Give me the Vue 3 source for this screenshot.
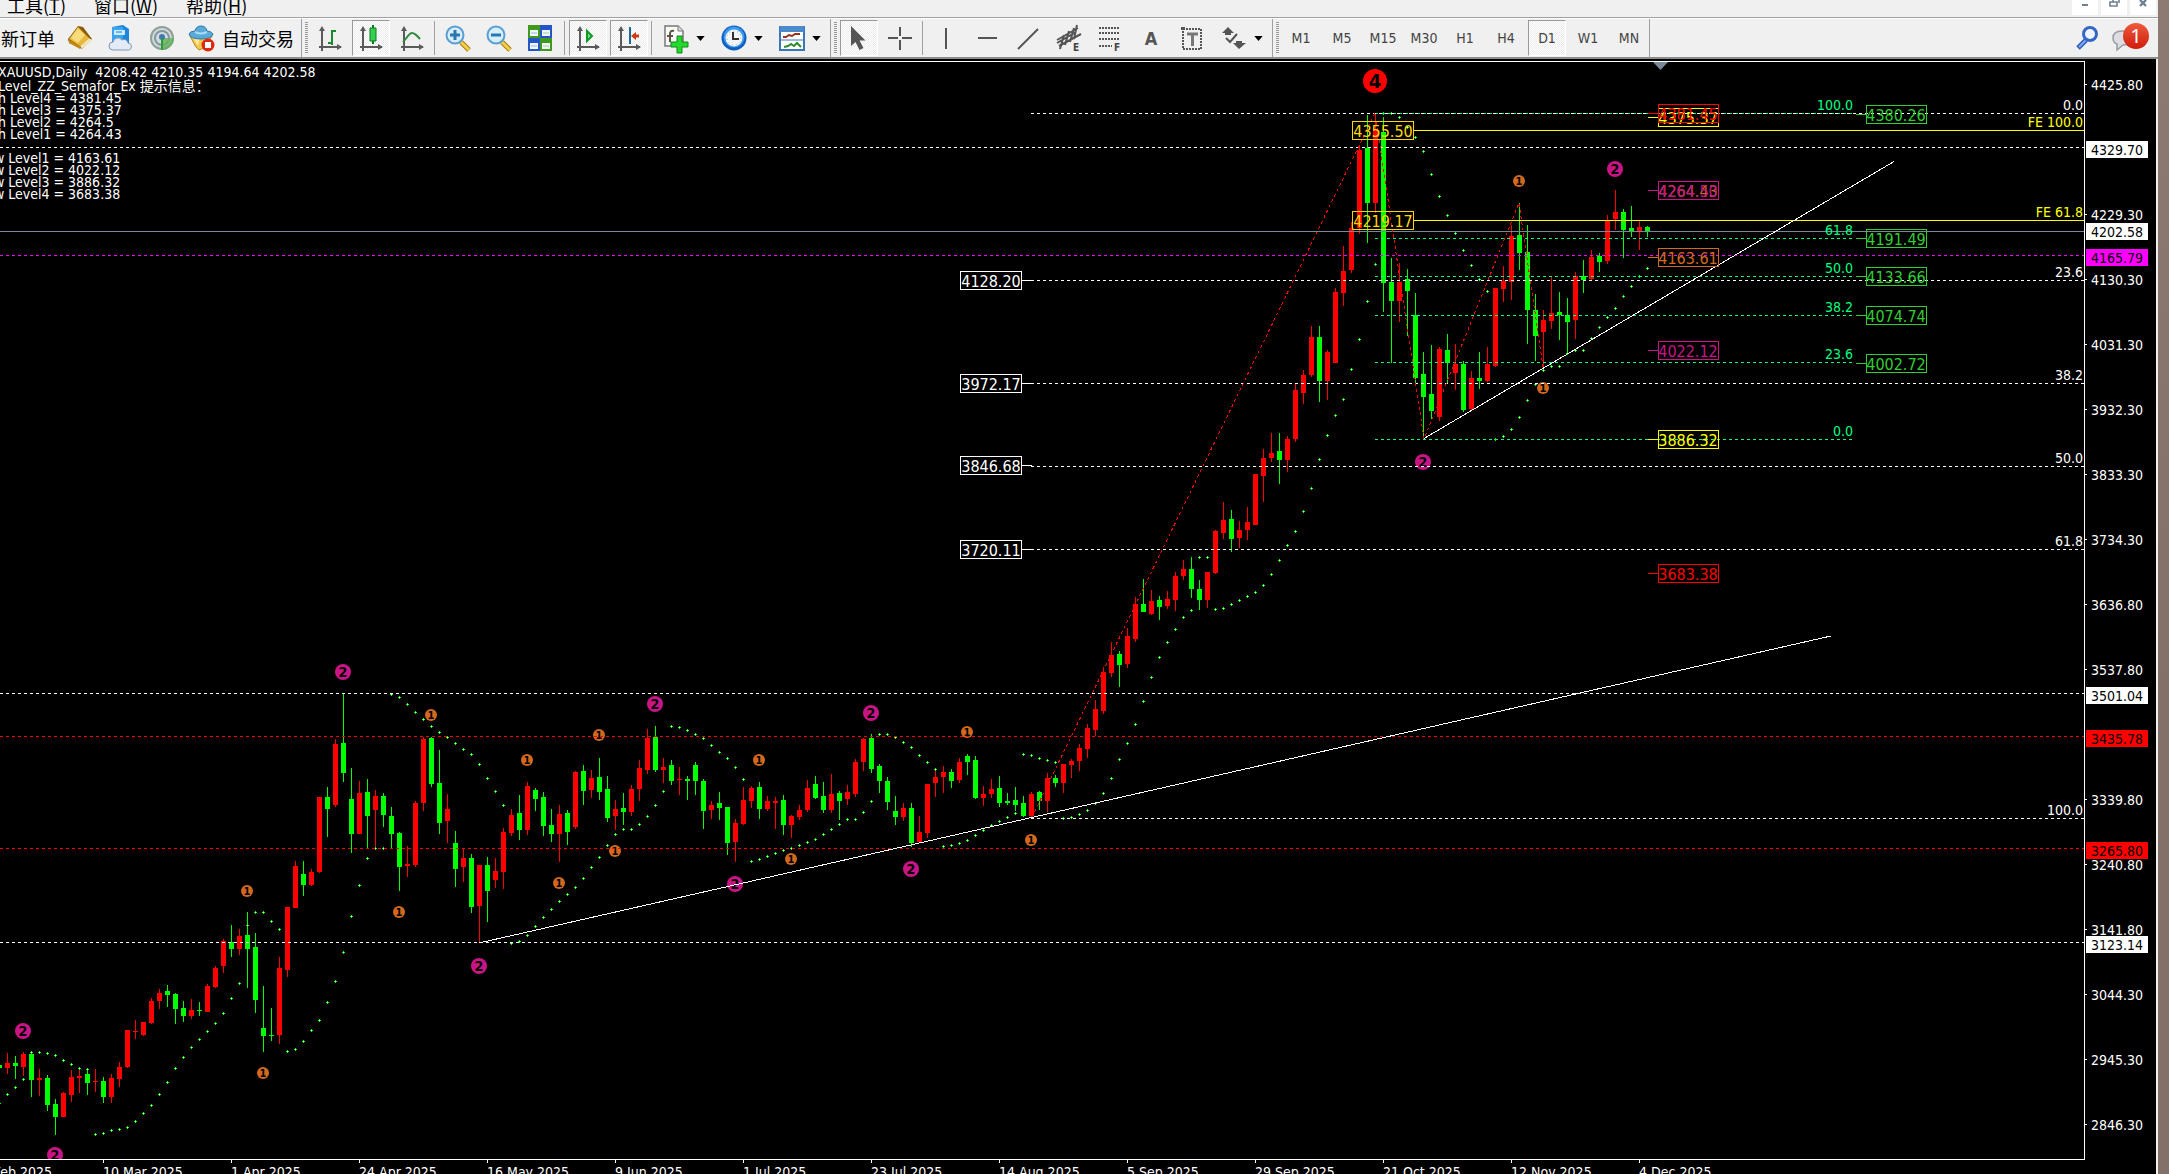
<script setup>
const menus = [
  { name: '工具', key: 'T' },
  { name: '窗口', key: 'W' },
  { name: '帮助', key: 'H' },
]
const frames = ['M1', 'M5', 'M15', 'M30', 'H1', 'H4', 'D1', 'W1', 'MN']

const FOLD = 640
const SPREAD = 1.0218
const row = (y) => (y > FOLD ? Math.round(FOLD + (y - FOLD) * SPREAD) : y)
const col = (i) => 7 + 8 * i

// Each bar: direction, high, body top, body bottom, low.
const raw = `g 1055 1056 1059 1059|r 1044 1054 1059 1065|g 1047 1054 1057 1070|r 1043 1045 1058 1067|g 1043 1045 1071 1087|r 1060 1069 1071 1086|g 1066 1069 1095 1101|g 1089 1094 1107 1124|r 1082 1083 1107 1107|r 1061 1068 1085 1092|r 1059 1067 1069 1083|g 1059 1065 1074 1085|r 1060 1072 1073 1082|g 1068 1072 1087 1093|r 1065 1069 1087 1093|r 1053 1058 1070 1077|r 1022 1022 1058 1059|r 1012 1023 1024 1030|r 1014 1014 1027 1028|r 990 993 1015 1016|r 982 985 993 1001|g 978 984 987 999|g 985 986 1001 1016|g 993 1000 1008 1014|r 991 1002 1008 1011|g 994 1002 1003 1008|r 977 979 1004 1004|r 959 961 980 981|r 933 935 959 966|g 919 936 942 950|r 923 930 942 948|g 906 929 942 981|g 927 940 992 1005|g 979 1020 1028 1043|g 1000 1027 1028 1032|r 950 961 1027 1035|r 901 901 963 970|r 856 861 902 902|g 856 869 880 891|r 864 867 880 881|r 794 794 867 868|g 784 794 805 833|r 737 742 801 803|g 693 741 770 779|g 765 796 830 848|r 778 790 830 830|g 776 789 812 844|r 787 793 806 843|g 790 793 811 823|g 803 812 830 844|g 828 829 862 886|r 842 859 861 872|r 798 800 860 862|r 735 737 800 807|g 735 736 781 784|g 748 780 819 830|r 791 805 817 839|g 827 839 864 882|r 844 853 862 877|g 849 853 901 907|r 860 860 900 937|g 852 860 886 916|r 853 866 875 883|r 824 828 867 884|r 805 811 829 832|g 792 809 826 836|r 779 783 826 831|g 785 787 796 807|g 789 794 822 832|g 805 821 830 838|r 801 810 830 857|g 806 809 828 841|r 768 769 823 825|g 762 768 788 801|r 767 775 787 795|g 755 774 789 797|g 773 786 814 818|r 797 805 812 826|g 790 804 808 821|r 782 786 808 812|r 757 765 786 798|r 727 736 767 771|g 724 735 767 769|r 755 764 767 780|g 757 762 778 782|r 764 776 777 792|g 773 776 778 797|g 759 762 778 792|g 776 778 807 825|r 798 801 806 815|g 789 800 804 816|g 803 803 839 850|r 815 819 838 857|r 784 797 820 821|r 783 785 798 804|g 779 784 805 815|r 793 798 805 807|r 794 798 800 825|g 792 797 821 831|r 811 812 821 834|r 801 806 813 816|r 777 785 806 808|g 773 781 795 796|g 779 793 806 809|r 771 791 806 809|g 788 790 798 816|r 782 789 796 801|r 756 759 791 794|r 736 737 759 768|g 732 736 766 770|g 761 763 778 790|g 774 778 799 806|g 793 807 813 821|r 800 804 813 817|g 800 804 839 843|r 812 828 838 838|r 781 781 829 834|r 766 774 780 794|r 763 769 774 790|g 766 769 778 785|r 755 759 777 780|g 752 754 759 772|g 754 757 795 796|r 783 791 795 802|r 776 786 791 795|g 773 785 800 803|g 790 798 800 801|g 784 797 801 807|g 793 800 812 813|r 789 791 812 814|g 788 789 798 806|r 770 775 798 808|g 772 775 780 784|r 761 761 780 790|r 756 758 762 775|r 742 746 758 768|r 722 726 747 755|r 699 708 728 734|r 666 671 709 712|r 642 655 672 676|g 651 654 664 686|r 628 636 663 667|r 597 604 639 642|g 579 604 612 612|r 590 601 614 615|g 596 600 607 620|r 591 599 606 609|r 572 576 600 611|r 560 569 576 580|g 557 569 589 598|g 580 589 600 610|r 572 572 600 608|r 530 531 573 574|r 502 520 533 539|g 510 519 539 552|r 521 530 538 548|r 507 522 530 540|r 474 474 525 525|r 449 458 476 502|r 433 453 458 462|g 433 451 460 484|r 436 439 460 472|r 383 390 439 442|r 370 375 393 404|r 326 337 375 377|g 326 337 381 402|r 350 352 381 400|r 288 292 363 363|r 246 271 293 306|r 222 228 270 273|r 145 150 228 234|g 115 148 203 243|r 113 129 203 213|g 117 132 283 312|g 258 282 301 363|r 263 282 301 322|g 269 279 291 336|g 293 315 378 383|g 352 374 397 439|g 345 394 411 419|r 347 349 417 421|g 334 350 363 383|r 344 364 373 390|g 361 364 410 412|r 371 378 409 411|g 352 378 381 389|r 347 364 381 382|r 288 288 366 367|r 266 281 289 302|r 225 236 282 300|g 203 235 253 270|g 225 252 310 344|g 294 310 336 361|r 310 320 332 367|r 277 313 321 329|g 292 312 315 340|g 298 315 322 352|r 272 276 320 339|g 260 276 280 293|r 250 257 279 280|g 253 256 262 272|r 215 221 261 264|r 190 212 219 230|g 209 212 230 258|g 206 228 232 237|r 221 227 232 250|g 226 227 232 237`
const candles = raw.split('|').map((s, n) => {
  const [c, h, t, b, l] = s.split(' ')
  const top = row(+t)
  const bottom = row(+b)
  return {
    x: col(n - 1),
    fill: c === 'g' ? '#00ff00' : '#ff0000',
    high: row(+h),
    low: row(+l),
    top,
    bottom: Math.max(bottom, top + 1),
  }
})

// Parabolic runs: index of the first bar, then one row per bar.
const runs = [
  [-1, 1093, 1084, 1077, 1070],
  [3, 1043, 1043, 1044, 1046, 1051, 1055, 1059, 1060],
  [11, 1123, 1122, 1120, 1119, 1117, 1111, 1103, 1095, 1084, 1073, 1059, 1048, 1038, 1030, 1023, 1015, 1005, 990, 976, 919],
  [31, 906, 906, 915, 923],
  [35, 1042, 1040, 1032, 1022, 1012, 994, 974, 945, 910, 880, 853, 844, 844],
  [48, 693, 696, 703, 710, 717, 724, 730, 735, 741, 747, 752, 761, 775, 788, 801],
  [63, 937, 935, 929, 920, 911, 903, 895, 889, 882, 873, 862, 852, 841, 830, 825, 825, 820, 812, 801, 788],
  [83, 724, 725, 728, 732, 736, 743, 750, 755, 764, 776],
  [93, 856, 854, 851, 848, 846, 844, 841, 838, 835, 830, 825, 820, 815, 815, 808, 798],
  [109, 732, 732, 735, 740, 745, 753, 759, 766],
  [117, 842, 841, 839, 836, 831, 826, 821, 817, 813, 809],
  [127, 752, 753, 755, 757, 759],
  [132, 814, 813, 810, 806, 800, 790, 775, 756, 741, 722, 700, 676, 657, 642, 629, 617, 610],
  [149, 557, 557],
  [151, 609, 608, 604, 600, 596, 592, 585, 574, 560, 545, 531, 511, 488, 459, 435, 415, 399, 369, 339, 301, 264],
  [172, 113, 113, 117, 127, 137, 151, 174, 196, 215, 233, 250, 265, 279, 291],
  [186, 439, 436, 429, 417, 400, 384, 370, 366, 366, 353, 350, 350, 338, 327, 317, 308, 296, 286, 276, 268],
]
const dots = runs.flatMap(([start, ...ys]) => ys.map((y, k) => ({ x: col(start + k), y: row(y) })))

const marks = [
  { k: 2, at: [[23, 1031], [55, 1155], [343, 672], [655, 704], [735, 884], [479, 966], [871, 713], [911, 869], [1615, 169], [1423, 462]] },
  { k: 1, at: [[247, 891], [399, 912], [263, 1073], [431, 715], [527, 760], [599, 735], [559, 883], [615, 851], [759, 760], [791, 859], [967, 732], [1031, 840], [1519, 181], [1543, 388]] },
  { k: 4, at: [[1375, 81]] },
]
const markStyle = {
  1: { r: 6, fill: '#d2691e', size: 11, drop: 4 },
  2: { r: 8, fill: '#c71585', size: 14, drop: 5 },
  4: { r: 12, fill: '#ff0000', size: 20, drop: 7 },
}
const semafors = marks.flatMap((m) => m.at.map(([x, y]) => ({ x, y, k: m.k, ...markStyle[m.k] })))

const dashed = [
  [0, 2084, 147, '#fff'], [0, 2084, 693, '#fff'], [0, 2084, 942, '#fff'],
  [0, 2084, 736, '#f00'], [0, 2084, 848, '#f00'], [0, 2084, 255, '#f0f'],
  [1375, 1852, 113, '#00ff7f'], [1375, 1852, 238, '#00ff7f'], [1375, 1852, 276, '#00ff7f'],
  [1375, 1852, 315, '#00ff7f'], [1375, 1852, 362, '#00ff7f'], [1375, 1852, 439, '#00ff7f'],
  [1031, 2084, 113, '#fff'], [1031, 2084, 280, '#fff'], [1031, 2084, 383, '#fff'],
  [1031, 2084, 466, '#fff'], [1031, 2084, 549, '#fff'], [1031, 2084, 818, '#fff'],
]
const fibs = [
  ['0.0', 2083, 113, '#fff'], ['23.6', 2083, 280, '#fff'], ['38.2', 2083, 383, '#fff'],
  ['50.0', 2083, 466, '#fff'], ['61.8', 2083, 549, '#fff'], ['100.0', 2083, 818, '#fff'],
  ['FE 100.0', 2083, 130, '#ff0'], ['FE 61.8', 2083, 220, '#ff0'],
  ['100.0', 1853, 113, '#00ff7f'], ['61.8', 1853, 238, '#00ff7f'], ['50.0', 1853, 276, '#00ff7f'],
  ['38.2', 1853, 315, '#00ff7f'], ['23.6', 1853, 362, '#00ff7f'], ['0.0', 1853, 439, '#00ff7f'],
]
// Price tags: text, box left, line row, colour, side of the connector.
const tags = [
  ['4128.20', 960, 280, '#fff', 'r'], ['3972.17', 960, 383, '#fff', 'r'],
  ['3846.68', 960, 465, '#fff', 'r'], ['3720.11', 960, 549, '#fff', 'r'],
  ['4355.50', 1352, 130, '#ffd700', ''], ['4219.17', 1352, 220, '#ffd700', ''],
  ['4375.37', 1658, 117, '#ff0', 'l'], ['4381.45', 1658, 113, '#f00', 'l'],
  ['4264.43', 1658, 190, '#d2691e', 'l'], ['4264.50', 1658, 190, '#c71585', 'l'],
  ['4163.61', 1658, 257, '#d2691e', 'l'], ['4022.12', 1658, 350, '#c71585', 'l'],
  ['3886.32', 1658, 439, '#ff0', 'l'], ['3683.38', 1658, 573, '#f00', 'l'],
  ['4380.26', 1866, 114, '#32cd32', 'l'], ['4191.49', 1866, 238, '#32cd32', 'l'],
  ['4133.66', 1866, 276, '#32cd32', 'l'], ['4074.74', 1866, 315, '#32cd32', 'l'],
  ['4002.72', 1866, 363, '#32cd32', 'l'],
]
const scale = [
  ['4425.80', 84], ['4229.30', 214], ['4130.30', 279], ['4031.30', 344], ['3932.30', 409],
  ['3833.30', 474], ['3734.30', 539], ['3636.80', 604], ['3537.80', 669], ['3339.80', 799],
  ['3240.80', 864], ['3141.80', 929], ['3044.30', 994], ['2945.30', 1059], ['2846.30', 1124],
]
const flags = [
  ['4329.70', 141, '#fff', '#000'], ['4202.58', 223, '#fff', '#000'], ['4165.79', 249, '#f0f', '#000'],
  ['3501.04', 687, '#fff', '#000'], ['3435.78', 730, '#f00', '#000'], ['3265.80', 842, '#f00', '#000'],
  ['3123.14', 936, '#fff', '#000'],
]
const dates = ['10 Mar 2025', '1 Apr 2025', '24 Apr 2025', '16 May 2025', '9 Jun 2025', '1 Jul 2025', '23 Jul 2025',
  '14 Aug 2025', '5 Sep 2025', '29 Sep 2025', '21 Oct 2025', '12 Nov 2025', '4 Dec 2025']
const info = [
  ['XAUUSD,Daily\u00a0 4208.42 4210.35 4194.64 4202.58', -2, 77],
  ['Level_ZZ_Semafor_Ex 提示信息：', -2, 91],
  ['h Level4 = 4381.45', -2, 103], ['h Level3 = 4375.37', -2, 115],
  ['h Level2 = 4264.5', -2, 127], ['h Level1 = 4264.43', -2, 139],
  ['w Level1 = 4163.61', -6, 163], ['w Level2 = 4022.12', -6, 175],
  ['w Level3 = 3886.32', -6, 187], ['w Level4 = 3683.38', -6, 199],
]
</script>

<template>
  <div class="desktop">
    <main class="window">
      <header class="menubar">
        <nav class="menus">
          <button v-for="m in menus" :key="m.key" class="menu">{{ m.name }}(<u>{{ m.key }}</u>)</button>
        </nav>
        <div class="winbtns">
          <button aria-label="最小化"><svg viewBox="0 0 26 15"><path d="M10 5h6" stroke="#6f8093" stroke-width="2" /></svg></button>
          <button aria-label="还原"><svg viewBox="0 0 26 15"><path d="M9 2h7v4H9zM12 2V0M12 -1h6v4" fill="none" stroke="#6f8093" stroke-width="1.6" /></svg></button>
          <button aria-label="关闭"><svg viewBox="0 0 26 15"><path d="M10 0l6 6M16 0l-6 6" stroke="#6f8093" stroke-width="2.4" /></svg></button>
        </div>
      </header>

      <div class="toolbar">
        <button class="tool order">新订单</button>
        <button class="tool" aria-label="历史数据">
          <svg class="ic" viewBox="0 0 26 26"><path d="M1 14 11 1l5 1 9 12-10 10L2 18z" fill="#8a5a08" /><path d="M2 14 11 2l11 11-9 8z" fill="#e9b83a" /><path d="M4 13 11 3l7 7-7 8z" fill="#f8db7d" /><path d="M2 15l11 6v3L2 18z" fill="#c48a16" /><path d="M13 21l9-8 3 2-10 9z" fill="#f3e3b0" /></svg>
        </button>
        <button class="tool" aria-label="虚拟主机">
          <svg class="ic" viewBox="0 0 26 26"><path d="M4 2 15 0l6 4v14H4z" fill="#1c86d8" /><path d="M4 2h11v14H4z" fill="#39a5f0" /><path d="M6 5h11v5H6z" fill="#c9ecff" /><path d="M8 7h6" stroke="#1c86d8" /><path d="M5 25a4 4 0 0 1 0-8 5 5 0 0 1 9-2 4 4 0 0 1 6 3 3.600 3.600 0 0 1 1 7z" fill="#e3ebf6" stroke="#7e95b5" /></svg>
        </button>
        <button class="tool" aria-label="信号">
          <svg class="ic" viewBox="0 0 26 26"><circle cx="13" cy="13" r="12" fill="#d3dbd6" /><circle cx="13" cy="13" r="11" fill="none" stroke="#8fa09a" stroke-width="2" /><circle cx="13" cy="13" r="7" fill="none" stroke="#8296a8" stroke-width="2" /><path d="M13 13h12a12 12 0 0 1-12 12z" fill="#63b25c" opacity=".8" /><circle cx="13" cy="12" r="3" fill="#3f78b8" /><path d="M13 13v12" stroke="#2d9a34" stroke-width="2" /></svg>
        </button>
        <button class="tool auto">
          <svg class="ic" viewBox="0 0 26 26"><path d="M2 11h22l-8 12-5 2-3-3z" fill="#f0c94c" stroke="#b9861a" /><path d="M5 13l5 8 2-8z" fill="#fbe9a0" /><path d="M1 9q1 5 12 5t12-5q-2-3-6-3-1-5-6-5T7 6Q2 6 1 9z" fill="#5aa9d8" stroke="#2f7ba8" /><path d="M7 7q6 3 12 0" stroke="#a8dcf5" stroke-width="2" fill="none" /><circle cx="20" cy="20" r="6.500" fill="#dc2a12" /><path d="M17 17h6v6h-6z" fill="#fff" /></svg>
          自动交易
        </button>
        <i class="sep tall"></i><i class="grip"></i>
        <button class="tool" aria-label="柱状图">
          <svg class="ic" viewBox="0 0 26 26"><path d="M5 3v23M2 22h22" class="ax" /><path d="M5 1l3 5H2zM25 22l-5-3v6z" fill="#5a5a5a" /><path d="M15 5v15M15 6h4M11 18h4" stroke="#168a2c" stroke-width="2" fill="none" /></svg>
        </button>
        <button class="tool on" aria-label="阴阳烛">
          <svg class="ic" viewBox="0 0 26 26"><path d="M5 3v23M2 22h22" class="ax" /><path d="M5 1l3 5H2zM25 22l-5-3v6z" fill="#5a5a5a" /><path d="M15 0v19" stroke="#087a1e" stroke-width="2" /><path d="M12 3h6v13h-6z" fill="#35d04e" stroke="#087a1e" stroke-width="1" /></svg>
        </button>
        <button class="tool" aria-label="折线图">
          <svg class="ic" viewBox="0 0 26 26"><path d="M5 3v23M2 22h22" class="ax" /><path d="M5 1l3 5H2zM25 22l-5-3v6z" fill="#5a5a5a" /><path d="M4 17C8 13 10 8 13 8q3 0 8 6" stroke="#2f8a41" stroke-width="2" fill="none" /></svg>
        </button>
        <i class="sep"></i>
        <button class="tool" aria-label="放大">
          <svg class="ic" viewBox="0 0 26 26"><path d="M16 17l8 8" stroke="#a8780e" stroke-width="5" /><path d="M16 17l8 8" stroke="#f3cf4a" stroke-width="3" /><circle cx="10" cy="10" r="8.500" fill="#d6edfb" stroke="#5a9fd0" stroke-width="2" /><path d="M10 5v10M5 10h10" stroke="#2a76ad" stroke-width="3" /></svg>
        </button>
        <button class="tool" aria-label="缩小">
          <svg class="ic" viewBox="0 0 26 26"><path d="M16 17l8 8" stroke="#a8780e" stroke-width="5" /><path d="M16 17l8 8" stroke="#f3cf4a" stroke-width="3" /><circle cx="10" cy="10" r="8.500" fill="#d6edfb" stroke="#5a9fd0" stroke-width="2" /><path d="M5 10h10" stroke="#2a76ad" stroke-width="3" /></svg>
        </button>
        <button class="tool" aria-label="平铺窗口">
          <svg class="ic" viewBox="0 0 26 26"><path d="M1 0h12v13H1zM13 13h12v13H13z" fill="#3f9a1c" /><path d="M13 0h12v13H13zM1 13h12v13H1z" fill="#2456c8" /><path d="M3 5h8v6H3zM15 5h8v6h-8zM3 18h8v6H3zM15 18h8v6h-8z" fill="#f2f7ff" /><path d="M4 8h6M4 21h6" stroke="#8fb5e8" /><path d="M16 8h6M16 21h6" stroke="#9fce8a" /></svg>
        </button>
        <i class="sep wide"></i>
        <button class="tool on" aria-label="自动滚动">
          <svg class="ic" viewBox="0 0 26 26"><path d="M5 3v23M2 22h22" class="ax" /><path d="M5 1l3 5H2zM25 22l-5-3v6z" fill="#5a5a5a" /><path d="M12 6v10l5-5z" fill="#7fe08a" stroke="#0f9a27" stroke-width="2" /></svg>
        </button>
        <button class="tool on" aria-label="图表平移">
          <svg class="ic" viewBox="0 0 26 26"><path d="M5 3v23M2 22h22" class="ax" /><path d="M5 1l3 5H2zM25 22l-5-3v6z" fill="#5a5a5a" /><path d="M14 2v17" stroke="#1a6a9a" stroke-width="2" /><path d="M23 11h-6" stroke="#cc3c0c" stroke-width="3" /><path d="M15 11l5-4v8z" fill="#cc3c0c" /></svg>
        </button>
        <i class="sep"></i>
        <button class="tool drop" aria-label="指标">
          <svg class="ic" viewBox="0 0 26 26"><path d="M2 1h13l5 5v15H2z" fill="#fafafa" stroke="#777" stroke-width="1.500" /><path d="M15 1v5h5" fill="#ddd" stroke="#777" /><path d="M11 6q-4-1-4 3v8M4 11h6" stroke="#5a5340" stroke-width="2" fill="none" /><path d="M14 11h5v6h6v5h-6v6h-5v-6H8v-5h6z" fill="#22d92c" stroke="#0c8a16" /></svg>
          <svg class="car" viewBox="0 0 10 6"><path d="M0 0h10L5 6z" /></svg>
        </button>
        <button class="tool drop" aria-label="周期">
          <svg class="ic" viewBox="0 0 26 26"><circle cx="13" cy="13" r="12.500" fill="#0f5fc0" /><circle cx="13" cy="12" r="10.500" fill="#3a9af0" /><circle cx="13" cy="13" r="8.500" fill="#f4f6f8" /><circle cx="13" cy="13" r="7" fill="none" stroke="#9aa6b4" stroke-dasharray="1 3" /><path d="M12 7v7h6" stroke="#333" stroke-width="2" fill="none" /></svg>
          <svg class="car" viewBox="0 0 10 6"><path d="M0 0h10L5 6z" /></svg>
        </button>
        <button class="tool drop" aria-label="模板">
          <svg class="ic" viewBox="0 0 26 26"><path d="M1 2h24v23H1z" fill="#fff" stroke="#3a77b8" stroke-width="2" /><path d="M1 1h24v6H1z" fill="#4a8acb" /><path d="M2 15h22" stroke="#3a77b8" /><path d="M4 12h3l3-2 3 1 3-2h5" stroke="#963018" stroke-width="2" fill="none" /><path d="M5 22l4-1 3-2 3 2 3-3 4 4" stroke="#2f8a2b" stroke-width="2" fill="none" /></svg>
          <svg class="car" viewBox="0 0 10 6"><path d="M0 0h10L5 6z" /></svg>
        </button>
        <i class="sep tall"></i><i class="grip"></i>
        <button class="tool on" aria-label="光标">
          <svg class="ic" viewBox="0 0 26 26"><path d="M5 1v20l4.500-4 4 8 4-2-4-7.500h6z" fill="#555" /></svg>
        </button>
        <button class="tool" aria-label="十字准线">
          <svg class="ic" viewBox="0 0 26 26"><path d="M13 2v9M13 15v10M1 13h10M15 13h10" class="st" /></svg>
        </button>
        <i class="sep"></i>
        <button class="tool" aria-label="垂直线"><svg class="ic" viewBox="0 0 26 26"><path d="M13 3v21" class="st" /></svg></button>
        <button class="tool" aria-label="水平线"><svg class="ic" viewBox="0 0 26 26"><path d="M4 13h19" class="st" /></svg></button>
        <button class="tool" aria-label="趋势线"><svg class="ic" viewBox="0 0 26 26"><path d="M3 24 23 4" class="st" /></svg></button>
        <button class="tool" aria-label="等距通道">
          <svg class="ic" viewBox="0 0 26 26"><path d="M1 15 22 3M3 21 25 9M4 24l4-14M9 20l4-14M14 17l4-14M18 14 21 0M1 18 20 7" class="st" /><text x="17" y="26" class="tag">E</text></svg>
        </button>
        <button class="tool" aria-label="斐波那契">
          <svg class="ic" viewBox="0 0 26 26"><path d="M2 3h21M2 8h21M2 14h21M2 21h13" class="st dot" /><text x="17" y="26" class="tag">F</text></svg>
        </button>
        <button class="tool letter">A</button>
        <button class="tool" aria-label="文字标签">
          <svg class="ic" viewBox="0 0 26 26"><path d="M4 4h18v20H4z" class="st dot" /><path d="M2 2h4v3H2z" fill="#555" /><path d="M8 9h11M13.500 9v12" stroke="#777" stroke-width="3" /></svg>
        </button>
        <button class="tool drop" aria-label="箭头">
          <svg class="ic" viewBox="0 0 26 26"><path d="M7 2l6 6h-3v2H4V8H1zM18 24l-6-6h3v-2h6v2h4z" fill="#555" /><path d="M5 13l4 4 7-8" class="st" /></svg>
          <svg class="car" viewBox="0 0 10 6"><path d="M0 0h10L5 6z" /></svg>
        </button>
        <i class="sep tall"></i><i class="grip"></i>
        <button v-for="f in frames" :key="f" class="tool frame" :class="{ on: f === 'D1' }">{{ f }}</button>
        <i class="sep tall end"></i>
        <span class="spring"></span>
        <button class="tool" aria-label="搜索">
          <svg class="ic" viewBox="0 0 26 26"><path d="M3 23l8-8" stroke="#2a5cc0" stroke-width="5" /><path d="M4 22l7-7" stroke="#7fa8ee" stroke-width="2" /><circle cx="15" cy="9" r="6.500" fill="#eef4fc" stroke="#3566c4" stroke-width="3" /></svg>
        </button>
        <button class="tool chat" aria-label="消息">
          <svg class="ic" viewBox="0 0 26 26"><path d="M11 6c-6 0-9 3-9 7 0 3 1 5 4 6v6l6-5c7 0 11-2 11-7s-5-7-12-7z" fill="#dddde4" stroke="#9a9aa4" stroke-width="1.500" /></svg>
          <b class="badge">1</b>
        </button>
      </div>

      <svg class="chart" viewBox="0 59 2156 1115" role="img" aria-label="XAUUSD Daily">
        <rect x="0" y="59" width="2156" height="1115" fill="#000" />
        <g shape-rendering="crispEdges">
          <g v-for="c in candles" :key="c.x" :fill="c.fill">
            <rect :x="c.x" :y="c.high" width="1" :height="c.low - c.high" />
            <rect :x="c.x - 2" :y="c.top" width="5" :height="c.bottom - c.top" />
          </g>
          <g v-for="(d, n) in dots" :key="n">
            <rect :x="d.x - 1" :y="d.y" width="3" height="1" fill="#00ff00" />
            <rect :x="d.x" :y="d.y - 1" width="1" height="3" fill="#00ff00" />
            <rect :x="d.x" :y="d.y" width="1" height="1" fill="#c8ffc8" />
          </g>
        </g>
        <g v-for="s in semafors" :key="s.x + '-' + s.y">
          <circle :cx="s.x" :cy="s.y" :r="s.r" :fill="s.fill" />
          <text :x="s.x" :y="s.y + s.drop" :font-size="s.size" text-anchor="middle" class="digit">{{ s.k }}</text>
        </g>
        <rect x="0" y="1159" width="2156" height="15" fill="#000" />

        <g shape-rendering="crispEdges" fill="none">
          <path d="M0 231.5H2084" stroke="#778899" />
          <path v-for="(l, n) in dashed" :key="n" :d="`M${l[0]} ${l[2] + 0.5}H${l[1]}`" :stroke="l[3]" stroke-dasharray="3 3" />
          <path d="M1413 130.5H2084M1413 220.500H2084" stroke="#ff0" />
          <path d="M1032 817 1375 113 1424 439 1519 203 1543 367" stroke="#f00" stroke-dasharray="3 3" />
          <path d="M1424 438.500 1894 161.500M479 943 1831 636" stroke="#fff" />
          <path d="M0 61.500H2084.500V1159.500H0" stroke="#fff" />
        </g>
        <path d="M1653 62h15l-7.500 8z" fill="#778899" />

        <g class="label">
          <text v-for="(f, n) in fibs" :key="n" :x="f[1]" :y="f[2] - 3" :fill="f[3]" text-anchor="end">{{ f[0] }}</text>
          <text v-for="t in info" :key="t[2]" :x="t[1]" :y="t[2]" fill="#fff">{{ t[0] }}</text>
        </g>

        <g v-for="(t, n) in tags" :key="n" class="price">
          <rect :x="t[1] + 0.5" :y="t[2] - 8.5" :width="t[1] < 1600 ? 61 : 60" height="18" fill="none" :stroke="t[3]" shape-rendering="crispEdges" />
          <path v-if="t[4]" :d="t[4] === 'r' ? `M${t[1] + 62} ${t[2] + 0.5}h10` : `M${t[1] - 10} ${t[2] + 0.5}h10`" :stroke="t[3]" shape-rendering="crispEdges" />
          <text :x="t[1] + (t[1] < 1600 ? 31 : 30)" :y="t[2] + 7" text-anchor="middle" :fill="t[3]">{{ t[0] }}</text>
        </g>

        <g class="label" fill="#fff">
          <g v-for="s in scale" :key="s[0]">
            <rect x="2084" :y="s[1]" width="3" height="1" />
            <text x="2091" :y="s[1] + 6">{{ s[0] }}</text>
          </g>
          <g v-for="f in flags" :key="f[0]">
            <rect x="2086" :y="f[1]" width="62" height="17" :fill="f[2]" />
            <text x="2091" :y="f[1] + 14" :fill="f[3]">{{ f[0] }}</text>
          </g>
          <text x="52" y="1177" text-anchor="end">Feb 2025</text>
          <g v-for="(d, n) in dates" :key="d">
            <rect :x="103 + 128 * n" y="1160" width="1" height="3" />
            <text :x="103 + 128 * n" y="1177">{{ d }}</text>
          </g>
        </g>
      </svg>
    </main>
  </div>
</template>

<style>
body {
  margin: 0;
  overflow: hidden;
}
</style>

<style scoped>
.desktop {
  display: flex;
  background: linear-gradient(#8d7a72, #837068 60%);
  font-family: "DejaVu Sans Condensed", "DejaVu Sans", "Noto Sans CJK SC", sans-serif;
}
.window {
  flex: 1;
  margin-right: 11px;
  background: #f0f0f0;
}
button {
  border: 0;
  padding: 0;
  background: none;
  font: inherit;
  color: #000;
}
.menubar {
  display: flex;
  justify-content: space-between;
  height: 17px;
  overflow: hidden;
  border-bottom: 1px solid #a0a0a0;
}
.menus {
  display: flex;
  align-items: flex-end;
  gap: 28px;
  padding-left: 7px;
}
.menu {
  height: 24px;
  line-height: 24px;
  padding-bottom: 6px;
  font-family: "Noto Sans CJK SC", sans-serif;
  font-size: 18px;
  white-space: nowrap;
}
.winbtns {
  display: flex;
  gap: 3px;
  padding-right: 2px;
}
.winbtns button {
  width: 26px;
  height: 15px;
  background: #fff;
}
.winbtns svg {
  display: block;
}
.toolbar {
  display: flex;
  align-items: center;
  gap: 3px;
  height: 38px;
  border-top: 1px solid #fff;
  border-bottom: 2px solid #8c8c8c;
}
.tool {
  flex: none;
  display: flex;
  align-items: center;
  justify-content: center;
  box-sizing: border-box;
  width: 38px;
  height: 36px;
  border: 1px solid transparent;
}
.tool.on {
  border-color: #9a9a9a #fff #fff #9a9a9a;
  background: conic-gradient(#ececec 25%, #fff 0 50%, #ececec 0 75%, #fff 0) 0 0 / 2px 2px;
}
.order,
.auto {
  font-family: "Noto Sans CJK SC", sans-serif;
  font-size: 18px;
  white-space: nowrap;
}
.order {
  width: 58px;
  justify-content: flex-start;
}
.auto {
  width: 114px;
  gap: 8px;
}
.ic {
  flex: none;
  width: 26px;
  height: 26px;
  overflow: visible;
}
.drop {
  width: 55px;
  justify-content: flex-start;
  gap: 7px;
  padding-left: 6px;
}
.car {
  width: 9px;
  height: 5px;
}
.frame {
  font-size: 14px;
  color: #444;
}
.letter {
  font-size: 18px;
  font-weight: bold;
  color: #555;
}
.sep {
  width: 1px;
  height: 34px;
  margin-right: 1px;
  background: #a0a0a0;
}
.sep.wide {
  margin-left: 2px;
}
.sep.tall {
  height: 38px;
}
.sep.end {
  margin-left: -2px;
}
.grip {
  width: 3px;
  height: 32px;
  margin-left: -1px;
  background: repeating-linear-gradient(#999 0 1px, #f0f0f0 1px 2px);
}
.spring {
  flex: 1;
}
.chat {
  position: relative;
  width: 44px;
  margin-right: 4px;
  justify-content: flex-start;
}
.badge {
  position: absolute;
  top: 2px;
  left: 12px;
  width: 26px;
  height: 26px;
  border-radius: 50%;
  background: linear-gradient(#ee5a3c, #d01c0c);
  color: #fff;
  font: 20px/26px "Noto Sans", sans-serif;
  text-align: center;
}
.ax {
  fill: none;
  stroke: #5a5a5a;
  stroke-width: 2;
}
.st {
  fill: none;
  stroke: #555;
  stroke-width: 2;
}
.dot {
  stroke-dasharray: 2 1;
}
.tag {
  font-size: 10px;
  font-weight: bold;
  fill: #444;
}
.chart {
  display: block;
  width: calc(100% - 2px);
  overflow: hidden;
}
.label text {
  font-size: 14px;
}
.price text {
  font-size: 16px;
}
.digit {
  font-weight: bold;
  fill: #000;
}
</style>
